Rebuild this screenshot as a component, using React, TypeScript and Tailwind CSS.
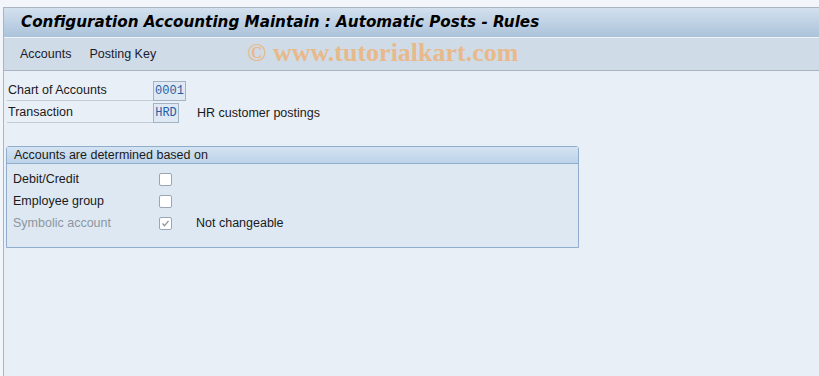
import React from 'react';

const sans = { fontFamily: '"Liberation Sans", Arial, sans-serif' };

function Field({ label, value, width, text }: { label: string; value: string; width: string; text?: string }) {
  return (
    <div className="flex items-center h-[22px]">
      <div className="w-[146px] h-[20px] border-b border-[#c3cdd8] flex items-center pl-[1px] text-[12.5px] text-[#1a1a1a]">
        {label}
      </div>
      <div
        className={`h-[20px] ${width} border border-[#a3b3c4] bg-[#dfe9f3] flex items-center justify-center text-[12px] text-[#1f5ea8]`}
        style={{ fontFamily: '"Liberation Mono", "Courier New", monospace' }}
      >
        {value}
      </div>
      {text && <div className="ml-[18px] text-[12.5px] text-[#1a1a1a]">{text}</div>}
    </div>
  );
}

function CheckRow({ label, checked, disabled, note }: { label: string; checked?: boolean; disabled?: boolean; note?: string }) {
  return (
    <div className="flex items-center h-[22px]">
      <div className={`w-[152px] pl-[6px] text-[12.5px] ${disabled ? 'text-[#8c96a0]' : 'text-[#1a1a1a]'}`}>{label}</div>
      <div className="w-[13px] h-[13px] border border-[#9aa6b3] bg-white rounded-[2px] flex items-center justify-center">
        {checked && (
          <svg width="9" height="9" viewBox="0 0 9 9">
            <path d="M1.5 4.5 L3.5 6.8 L7.5 1.8" fill="none" stroke="#8a949e" strokeWidth="1.3" />
          </svg>
        )}
      </div>
      {note && <div className="ml-[24px] text-[12.5px] text-[#1a1a1a]">{note}</div>}
    </div>
  );
}

export default function App() {
  return (
    <div className="w-[819px] h-[376px] bg-[#f2f5fa] pt-[7px] overflow-hidden" style={sans}>
      <div className="h-[369px] ml-[3px] border-l border-t border-[#aab4c2] bg-[#e9eff7] flex flex-col">
        {/* title */}
        <div className="h-[30px] bg-gradient-to-b from-[#d3e0ee] to-[#abc3da] flex items-center pl-[17px] border-b border-[#eef3f8]">
          <h1
            className="text-[15.2px] font-bold italic text-black"
            style={{ fontFamily: '"DejaVu Sans", Verdana, sans-serif' }}
          >
            Configuration Accounting Maintain : Automatic Posts - Rules
          </h1>
        </div>
        {/* menu */}
        <div className="relative h-[33px] bg-[#cfdce7] border-b border-[#a9b3c2] flex items-center pl-[16px] gap-[18px] text-[12.5px] text-[#1a1a2e]">
          <span>Accounts</span>
          <span>Posting Key</span>
          <span
            className="absolute left-[243px] top-[-5px] text-[26px] font-bold text-[#e8b98b]"
            style={{ fontFamily: '"Liberation Serif", "Times New Roman", serif' }}
          >
            © www.tutorialkart.com
          </span>
        </div>
        {/* fields */}
        <div className="pl-[3px] pt-[9px] flex flex-col">
          <Field label="Chart of Accounts" value="0001" width="w-[33px]" />
          <Field label="Transaction" value="HRD" width="w-[26px]" text="HR customer postings" />
        </div>
        {/* group box */}
        <div className="ml-[2px] mt-[22px] w-[573px] h-[102px] border border-[#8fadcc] rounded-t-[3px] bg-[#dde8f3] flex flex-col">
          <div className="h-[17px] bg-gradient-to-b from-[#d5e3f1] to-[#bcd3e9] border-b border-[#8fadcc] flex items-center pl-[7px] text-[12.5px] text-[#1a1a1a]">
            Accounts are determined based on
          </div>
          <div className="pt-[4px] flex flex-col">
            <CheckRow label="Debit/Credit" />
            <CheckRow label="Employee group" />
            <CheckRow label="Symbolic account" checked disabled note="Not changeable" />
          </div>
        </div>
      </div>
    </div>
  );
}
